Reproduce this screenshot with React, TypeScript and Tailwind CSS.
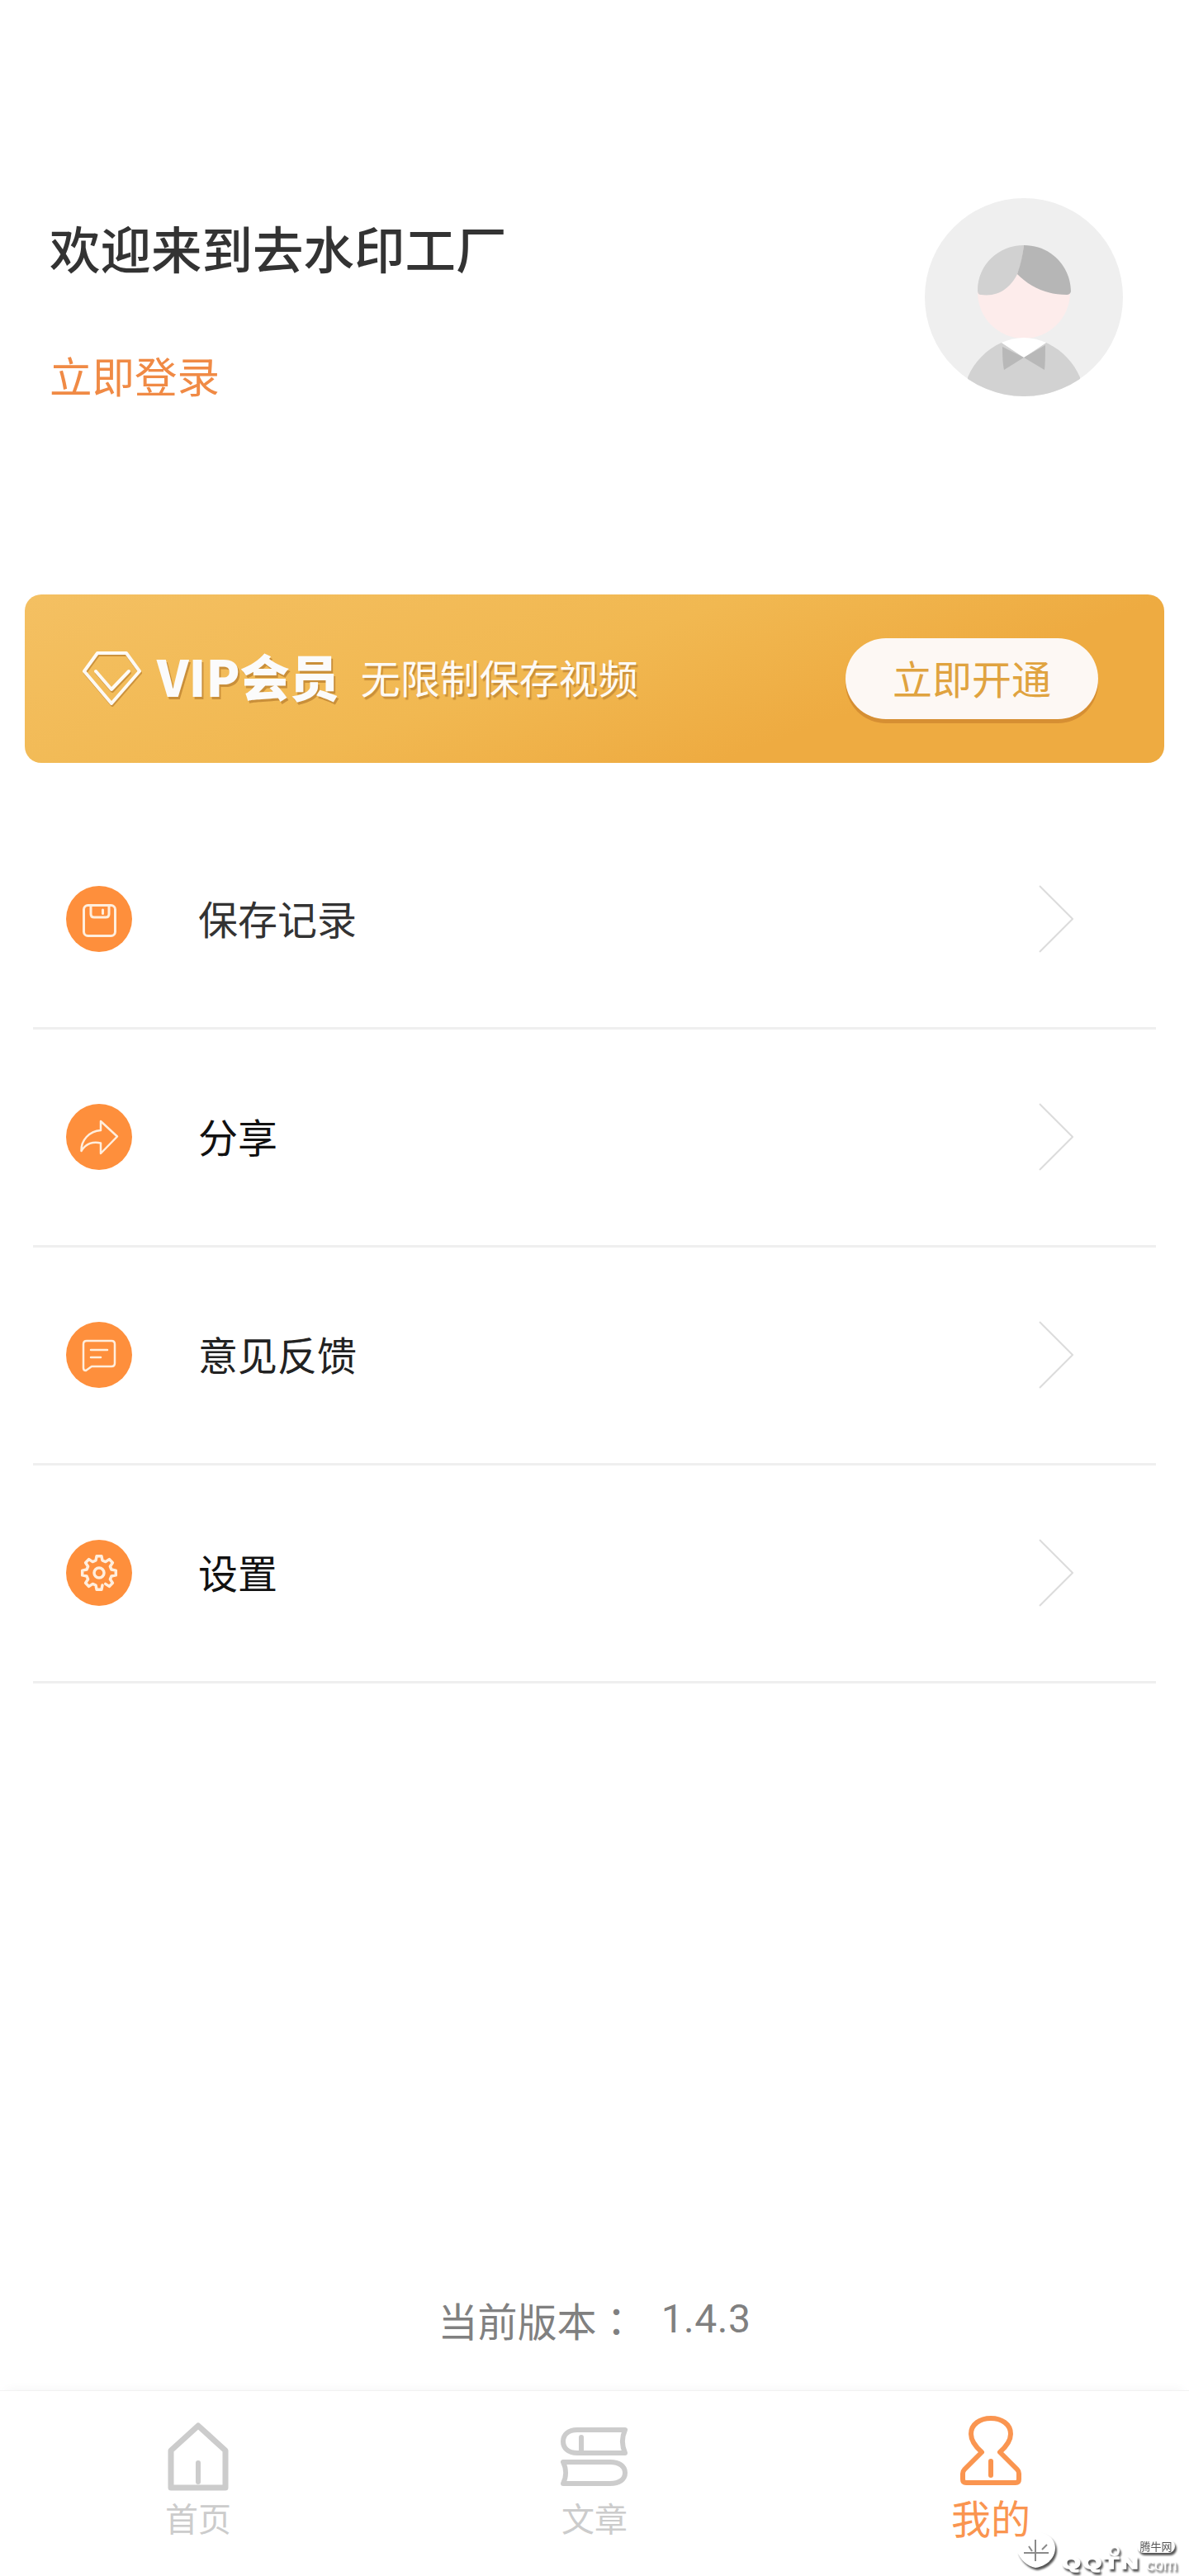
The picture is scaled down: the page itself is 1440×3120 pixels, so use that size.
const font = "font-['Noto_Sans_CJK_SC','Noto_Sans',sans-serif]";

function Avatar() {
  return (
    <svg width="240" height="240" viewBox="0 0 240 240" className="shrink-0">
      <defs>
        <clipPath id="avatar-clip">
          <circle cx="120" cy="120" r="120" />
        </clipPath>
      </defs>
      <circle cx="120" cy="120" r="120" fill="#efefef" />
      <g clipPath="url(#avatar-clip)">
        <circle cx="120" cy="114" r="56" fill="#fdeceb" />
        <path d="M120 57 C90 57 64 80 64 112 Q64 117 68 117 C90 120 104 108 112 92 Q118 78 120 57 Z" fill="#d1d1d1" />
        <path d="M120 57 C154 57 177 84 177 113 Q176 117 172 117 C145 117 126 106 112 92 Q118 75 120 57 Z" fill="#b6b6b6" />
        <path d="M52 217 C60 198 75 183 93 175 L120 193 L147 175 C165 183 180 198 188 217 L188 250 H52 Z" fill="#d2d2d2" />
        <path d="M93 175 Q120 163 147 175 L120 193 Z" fill="#ffffff" />
        <path d="M94 180 L120 193 L96 208 Q94 200 94 180 Z" fill="#b8b8b8" />
        <path d="M146 178 L120 193 L145 208 Q146 200 146 178 Z" fill="#b8b8b8" />
      </g>
    </svg>
  );
}

function Diamond() {
  return (
    <svg width="72" height="68" viewBox="0 0 72 68" fill="none" className="shrink-0 drop-shadow-[1px_2px_0_#c98f3a]">
      <path d="M18 3 H53 L69 25 L35 64 L2 25 Z" stroke="#ffffff" strokeWidth="4" strokeLinejoin="round" opacity="0.95" />
      <path d="M16 25 L35 47 L56 25" stroke="#ffffff" strokeWidth="4" strokeLinecap="round" strokeLinejoin="round" opacity="0.95" />
    </svg>
  );
}

function gearPath() {
  const pts: string[] = [];
  const at = (deg: number, r: number) => {
    const a = (deg * Math.PI) / 180;
    return `${(40 + r * Math.cos(a)).toFixed(1)} ${(40 + r * Math.sin(a)).toFixed(1)}`;
  };
  // one tooth per 45deg, starting at the bottom tooth; the gap sits between the last and the first
  for (let k = 0; k < 8; k++) {
    const t = 90 + 45 * k;
    pts.push(at(t - 15, 15.5), at(t - 8, 20.5), at(t + 8, 20.5), at(t + 15, 15.5));
  }
  return "M" + pts.join(" L");
}

function SaveIcon() {
  return (
    <>
      <rect x="21.5" y="23.5" width="38" height="37" rx="5" />
      <path d="M30 24 V34 Q30 38 34 38 H48 Q52 38 52 34 V24" />
      <path d="M44.5 29 V33.5" />
    </>
  );
}

function ShareIcon() {
  return <path d="M42 21 L62 39.5 L42 60 L42 47.5 C33 45 24 48 18.5 57 C18 44 28 33 42 32 Z" strokeWidth="2.5" />;
}

function FeedbackIcon() {
  return (
    <>
      <path d="M25 23 H55 Q59 23 59 27 V50 Q59 54 55 54 H31 L24 59 Q21 59 21 56 V27 Q21 23 25 23 Z" strokeWidth="2.5" />
      <path d="M30 34 H50 M30 43 H42" strokeWidth="2.5" />
    </>
  );
}

function GearIcon() {
  return (
    <>
      <path d={gearPath()} strokeWidth="3.5" />
      <circle cx="40" cy="40" r="6" strokeWidth="3.5" />
    </>
  );
}

const rows = [
  { label: "保存记录", icon: <SaveIcon />, color: "text-[#333333]" },
  { label: "分享", icon: <ShareIcon />, color: "text-[#111111]" },
  { label: "意见反馈", icon: <FeedbackIcon />, color: "text-[#222222]" },
  { label: "设置", icon: <GearIcon />, color: "text-[#111111]" },
];

function MenuRow({ label, icon, color }: { label: string; icon: React.ReactNode; color: string }) {
  return (
    <div className="h-[265px] mx-10 flex items-center pl-10 pr-[100px] border-b-[3px] border-[#efefef] -mb-px">
      <div className="w-20 h-20 rounded-full bg-[#fe8f3c] shrink-0">
        <svg
          width="80"
          height="80"
          viewBox="0 0 80 80"
          fill="none"
          stroke="#ffeedd"
          strokeWidth="3"
          strokeLinecap="round"
          strokeLinejoin="round"
        >
          {icon}
        </svg>
      </div>
      <span className={`ml-20 flex-1 pb-[4px] text-[48px] leading-none ${color}`}>{label}</span>
      <svg width="42" height="82" viewBox="0 0 42 82" fill="none" className="shrink-0">
        <path d="M1 1 L41 41 L1 81" stroke="#dcdcdc" strokeWidth="2" />
      </svg>
    </div>
  );
}

function HomeIcon() {
  return (
    <svg width="74" height="84" viewBox="0 0 74 84" fill="none" stroke="#cccccc" strokeWidth="7" strokeLinejoin="round">
      <path d="M37 4 L4 34 V79 H70 V34 Z" />
      <path d="M37 49 V72" strokeLinecap="round" strokeWidth="6" />
    </svg>
  );
}

function BookIcon() {
  return (
    <svg width="82" height="72" viewBox="0 0 82 72" fill="none" stroke="#cccccc" strokeWidth="6" strokeLinejoin="round">
      <path d="M78 3 H20 C9 3 3 9 3 17 C3 25 9 31 20 31 H78 C74 22 74 12 78 3 Z" />
      <path d="M25 12 V31" strokeLinecap="round" />
      <path d="M3 42 H60 C71 42 78 47 78 55 C78 63 71 68 60 68 H3 C7 60 7 50 3 42 Z" />
    </svg>
  );
}

function PersonIcon() {
  return (
    <svg width="74" height="84" viewBox="0 0 74 84" fill="none" stroke="#fa9550" strokeWidth="6" strokeLinejoin="round">
      <path d="M26 44 C17 36 13 28 13 22 C13 10 24 3 37 3 C50 3 61 10 61 22 C61 28 57 36 48 44 L69 65 Q71 67 71 70 V77 Q71 81 67 81 H7 Q3 81 3 77 V70 Q3 67 5 65 Z" />
      <path d="M37 55 V72" strokeLinecap="round" />
    </svg>
  );
}

function Watermark() {
  return (
    <div className="absolute left-[1232px] top-[3066px] w-[205px] h-[50px] text-white [filter:drop-shadow(2px_3px_1px_#555555)]">
      <svg width="46" height="44" viewBox="0 0 46 44" className="absolute left-0 top-0">
        <path d="M24 0 C38 2 46 10 46 20 C46 32 36 42 22 44 C12 42 3 34 0 24 L12 24 L12 16 C15 18 17 18 20 18 L20 6 L24 6 Z" fill="#ffffff" />
        <path d="M22 10 V36 M8 26 H38 M14 18 L18 24 M36 16 L30 22" stroke="#8a8a8a" strokeWidth="2" fill="none" />
      </svg>
      <span className="absolute left-[54px] top-[28px] text-[20px] leading-none font-bold tracking-[2px] [-webkit-text-stroke:1.5px_#ffffff] font-['Liberation_Sans',sans-serif] scale-x-[1.45] origin-left">
        QQTN
      </span>
      <span className="absolute left-[111px] top-[17px] w-[13px] h-[13px] rounded-full border-[3px] border-white" />
      <span className="absolute left-[156px] top-[30px] text-[20px] leading-none font-['Liberation_Sans',sans-serif]">com</span>
      <span className="absolute left-[145px] top-[10px] w-[46px] h-[16px] rounded-full bg-white text-[#555555] text-[13px] leading-[16px] text-center">
        腾牛网
      </span>
    </div>
  );
}

export default function App() {
  return (
    <div className={`relative w-[1440px] h-[3120px] bg-white flex flex-col overflow-hidden ${font}`}>
      <header className="h-[720px] shrink-0 flex justify-between pl-[60px] pr-20 pt-[240px]">
        <div className="flex flex-col">
          <h1 className="mt-[26px] text-[61.5px] leading-[68px] font-medium text-[#333333]">欢迎来到去水印工厂</h1>
          <a className="mt-[90px] text-[51.5px] leading-[60px] text-[#f08a45]">立即登录</a>
        </div>
        <Avatar />
      </header>

      <section className="mx-[30px] h-[204px] shrink-0 rounded-[20px] flex items-center pl-[70px] pr-20 bg-[linear-gradient(160deg,#f4c062_0%,#f1b851_45%,#eeab41_72%)]">
        <Diamond />
        <span className="ml-[18px] mb-[8px] text-[60px] leading-none font-black text-[#fbfbfb] [text-shadow:2px_3px_0_#c98f3a]">
          VIP会员
        </span>
        <span className="ml-[26px] mb-[6px] flex-1 text-[48px] leading-none text-[#fdfaf5] [text-shadow:2px_3px_1px_#c98f3a]">
          无限制保存视频
        </span>
        <button className="w-[306px] h-[98px] pb-[4px] rounded-full bg-[#fdf8f4] text-[#e0a33f] text-[48px] leading-none shadow-[0_5px_0_#d68f33]">
          立即开通
        </button>
      </section>

      <main className="flex-1 flex flex-col pt-[58px]">
        <div className="flex flex-col">
          {rows.map((row) => (
            <MenuRow key={row.label} {...row} />
          ))}
        </div>
        <div className="mt-auto mb-[62px] flex justify-center items-center text-[48px] leading-none text-[#808080]">
          <span className="font-['Noto_Sans_CJK_TC',sans-serif]">当前版本：</span>
          <span className="ml-[30px] tracking-[0.5px] font-['Roboto',sans-serif]">1.4.3</span>
        </div>
      </main>

      <nav className="h-[225px] shrink-0 grid grid-cols-3 border-t border-[#f2f2f2] shadow-[0_-8px_12px_-8px_#f3f3f3]">
        <div className="flex flex-col items-center pt-[38px]">
          <HomeIcon />
          <span className="mt-[7px] text-[40px] leading-[48px] text-[#cccccc]">首页</span>
        </div>
        <div className="flex flex-col items-center pt-[44px]">
          <BookIcon />
          <span className="mt-[13px] text-[40px] leading-[48px] text-[#cccccc]">文章</span>
        </div>
        <div className="flex flex-col items-center pt-[30px]">
          <PersonIcon />
          <span className="mt-[10px] text-[48px] leading-[56px] text-[#fa9550]">我的</span>
        </div>
      </nav>

      <Watermark />
    </div>
  );
}
